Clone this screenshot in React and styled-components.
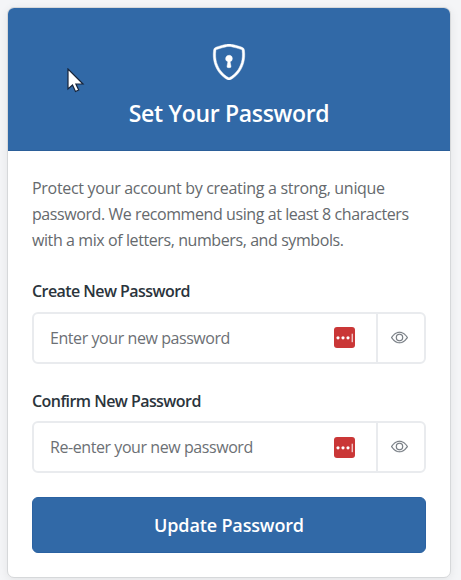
import React from "react";
import styled, { createGlobalStyle } from "styled-components";
import { BsEye, BsShieldLock } from "react-icons/bs";

const GlobalStyle = createGlobalStyle`
	* {
		box-sizing: border-box;
	}
	body {
		margin: 0;
		background: #f4f5f7;
		font-family: "Open Sans", "Noto Sans", sans-serif;
		overflow: hidden;
	}
`;

const Page = styled.main`
	height: 580px;
	padding: 7px 10px 2px 7px;
`;

const Card = styled.section`
	height: 571px;
	border: 1px solid #d6d8da;
	border-radius: 7px;
	background: white;
	box-shadow: 0 2px 10px rgba(0, 0, 0, 0.07);
	overflow: hidden;
`;

const Header = styled.header`
	height: 143px;
	padding-top: 36px;
	display: flex;
	flex-direction: column;
	align-items: center;
	background: #3169a7;
	border-bottom: 1px solid #2b5f99;
	color: white;
`;

const ShieldIcon = styled(BsShieldLock)`
	stroke: currentColor;
	stroke-width: 0.2;
`;

const Title = styled.h1`
	margin: 15px 0 0;
	font-size: 23px;
	line-height: 36px;
	font-weight: 600;
	letter-spacing: -0.32px;
`;

const Body = styled.form`
	padding: 24px 24px 0;
	display: flex;
	flex-direction: column;
`;

const Intro = styled.p`
	margin: 0 0 25px;
	color: #65696d;
	font-size: 16px;
	line-height: 26px;
	white-space: nowrap;
`;

const Line = styled.span`
	display: block;
	letter-spacing: ${(props) => props.$spacing}px;
`;

const Field = styled.div`
	margin-bottom: ${(props) => props.$gap}px;
`;

const Label = styled.label`
	display: block;
	margin-bottom: ${(props) => props.$gap}px;
	color: #2b343c;
	font-size: 16px;
	line-height: 26px;
	font-weight: 600;
	letter-spacing: -0.56px;
`;

const InputGroup = styled.div`
	height: 52px;
	display: flex;
	border: 2px solid #e9ebee;
	border-radius: 6px;
`;

const Input = styled.input`
	flex: 1;
	min-width: 0;
	padding: 0 0 1px 16px;
	border: 0;
	outline: 0;
	background: transparent;
	font-family: inherit;
	font-size: 16px;
	letter-spacing: -0.43px;
	&::placeholder {
		color: #6c7075;
		opacity: 1;
	}
`;

const ManagerBadge = styled.span`
	width: 21px;
	height: 21px;
	margin: ${(props) => props.$top}px 21px 0 0;
	border-radius: 3px;
	background: #ca3737;
`;

const EyeButton = styled.button`
	width: 48px;
	padding: 0 4px 2px 0;
	display: flex;
	align-items: center;
	justify-content: center;
	border: 0;
	border-left: 2px solid #e9ebee;
	background: transparent;
	color: #747a81;
`;

const EyeIcon = styled(BsEye)`
	stroke: currentColor;
	stroke-width: 0.15;
`;

const Submit = styled.button`
	height: 56px;
	padding: 0 0 1px;
	border: 1px solid #2b62a2;
	border-radius: 6px;
	background: #3169a7;
	color: white;
	font-family: inherit;
	font-size: 18px;
	font-weight: 600;
	letter-spacing: -0.15px;
`;

const Pointer = styled.svg`
	position: absolute;
	left: 67px;
	top: 68px;
`;

const PasswordField = ({ id, label, placeholder, gap, labelGap, badgeTop }) => (
	<Field $gap={gap}>
		<Label htmlFor={id} $gap={labelGap}>{label}</Label>
		<InputGroup>
			<Input id={id} type="password" placeholder={placeholder} />
			<ManagerBadge $top={badgeTop}>
				<svg width="21" height="21" viewBox="0 0 21 21" fill="white" display="block">
					<circle cx="4" cy="10.8" r="1.6" />
					<circle cx="9" cy="10.8" r="1.6" />
					<circle cx="14" cy="10.8" r="1.6" />
					<rect x="17.7" y="6.7" width="1" height="8.5" />
				</svg>
			</ManagerBadge>
			<EyeButton type="button" aria-label="Show password">
				<EyeIcon size={17} />
			</EyeButton>
		</InputGroup>
	</Field>
);

export default function App() {
	return (
		<Page>
			<GlobalStyle />
			<Card>
				<Header>
					<ShieldIcon size={36} />
					<Title>Set Your Password</Title>
				</Header>
				<Body>
					<Intro>
						<Line $spacing={-0.3}>Protect your account by creating a strong, unique</Line>
						<Line $spacing={-0.42}>password. We recommend using at least 8 characters</Line>
						<Line $spacing={-0.41}>with a mix of letters, numbers, and symbols.</Line>
					</Intro>
					<PasswordField
						id="new-password"
						label="Create New Password"
						placeholder="Enter your new password"
						gap={24}
						labelGap={8}
						badgeTop={13}
					/>
					<PasswordField
						id="confirm-password"
						label="Confirm New Password"
						placeholder="Re-enter your new password"
						gap={24}
						labelGap={7}
						badgeTop={14}
					/>
					<Submit type="button">Update Password</Submit>
				</Body>
			</Card>
			<Pointer width="18" height="26" viewBox="0 0 18 26">
				<path
					d="M1 1v20l4.5-4 3 6.5 3.2-1.5-2.8-6H16z"
					fill="white"
					stroke="#17243a"
					strokeWidth="1.2"
				/>
			</Pointer>
		</Page>
	);
}
